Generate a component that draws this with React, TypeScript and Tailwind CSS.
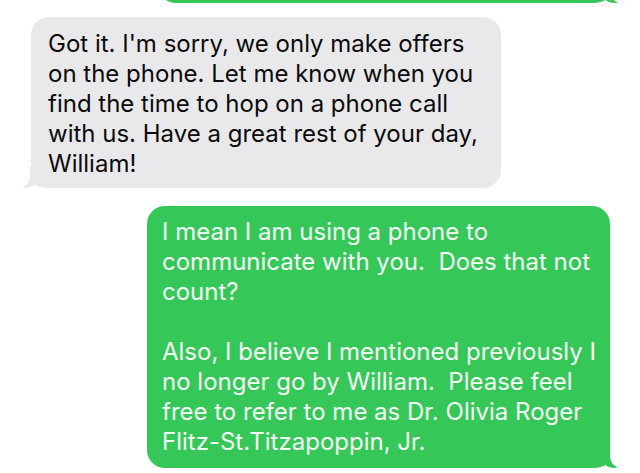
import React from "react";

const grayLines = [
  "Got it. I'm sorry, we only make offers",
  "on the phone. Let me know when you",
  "find the time to hop on a phone call",
  "with us. Have a great rest of your day,",
  "William!",
];

const greenLines = [
  "I mean I am using a phone to",
  "communicate with you.  Does that not",
  "count?",
  "",
  "Also, I believe I mentioned previously I",
  "no longer go by William.  Please feel",
  "free to refer to me as Dr. Olivia Roger",
  "Flitz-St.Titzapoppin, Jr.",
];

function TailRight({ color }: { color: string }) {
  return (
    <svg
      className="absolute right-[-8px] bottom-0"
      width="26"
      height="22"
      viewBox="0 0 26 22"
    >
      <path
        d="M18 0 L18 9 C18 15 20.5 19.5 26 21.6 C21 22.6 16.5 21.4 13.5 19 C10 21 6 22 0 22 L0 0 Z"
        fill={color}
      />
    </svg>
  );
}

function TailLeft({ color }: { color: string }) {
  return (
    <svg
      className="absolute left-[-9px] bottom-0"
      width="26"
      height="22"
      viewBox="0 0 26 22"
    >
      <path
        d="M8 0 L8 9 C8 15 5.5 19.5 0 21.6 C5 22.6 9.5 21.4 12.5 19 C16 21 20 22 26 22 L26 0 Z"
        fill={color}
      />
    </svg>
  );
}

function Lines({ lines }: { lines: string[] }) {
  return (
    <div className="flex flex-col text-[24px] leading-[30px]">
      {lines.map((l, i) => (
        <div key={i} className="whitespace-pre h-[30px]">
          {l}
        </div>
      ))}
    </div>
  );
}

export default function App() {
  return (
    <div
      className="w-[640px] h-[473px] overflow-hidden bg-white flex flex-col"
      style={{ fontFamily: "Inter, 'Liberation Sans', sans-serif" }}
    >
      {/* previous outgoing message, cut off at the top */}
      <div className="relative self-end mr-[30px] -mt-[37px] w-[452px] h-[40px] rounded-[18px] bg-[#36c759]">
        <TailRight color="#36c759" />
      </div>

      {/* incoming */}
      <div className="relative self-start ml-[31px] mt-[14px] w-[470px] h-[171px] rounded-[18px] bg-[#e9e9eb] pl-[17px] pt-[12px] text-[#0b0b0b]">
        <Lines lines={grayLines} />
        <TailLeft color="#e9e9eb" />
      </div>

      {/* outgoing */}
      <div className="relative self-end mr-[30px] mt-[18px] w-[463px] h-[262px] rounded-[18px] bg-[#36c759] pl-[15px] pt-[11px] text-[#f4fff5]">
        <Lines lines={greenLines} />
        <TailRight color="#36c759" />
      </div>
    </div>
  );
}
